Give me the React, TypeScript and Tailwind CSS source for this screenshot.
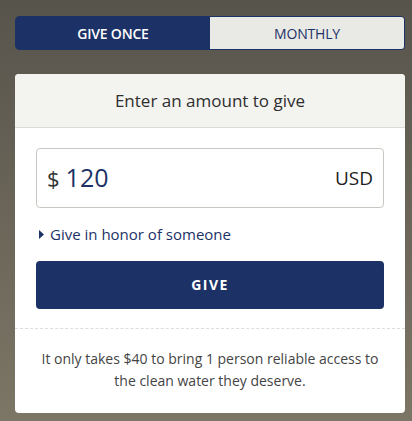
export default function App() {
  return (
    <div
      className="w-[412px] h-[421px] bg-gradient-to-b from-[#57544c] via-[#6a6558] to-[#7c7666] pl-[15px] pr-[7px] pt-[16px]"
      style={{ fontFamily: '"Open Sans", "Liberation Sans", sans-serif' }}
    >
      {/* Frequency toggle */}
      <div className="flex h-[34px] rounded-[4px] border border-[#1c3266] overflow-hidden">
        <button className="flex-1 bg-[#1c3266] text-white text-[14px] font-semibold tracking-[-0.2px]">
          GIVE ONCE
        </button>
        <button className="flex-1 bg-[#e9e9e5] text-[#1c3266] text-[14px] tracking-[-0.2px]">
          MONTHLY
        </button>
      </div>

      {/* Amount card */}
      <div className="mt-[24px] bg-white rounded-[4px] overflow-hidden">
        <div className="h-[54px] bg-[#f3f3f0] border-b border-[#dcdcd6] flex items-center justify-center">
          <h2 className="text-[17px] text-[#2e2e2e] font-medium">Enter an amount to give</h2>
        </div>

        <div className="px-[21px] pt-[20px] pb-[19px]">
          <div className="h-[60px] border border-[#c8c8c2] rounded-[4px] flex items-center justify-between px-[10px]">
            <div className="flex items-baseline gap-[6px]">
              <span className="text-[22px] text-[#333333]">$</span>
              <span className="text-[25px] text-[#1c3266]">120</span>
            </div>
            <span className="text-[19px] text-[#222222]">USD</span>
          </div>

          <div className="flex items-center gap-[6px] mt-[15px] pl-[3px]">
            <svg width="5" height="9" viewBox="0 0 5 9">
              <path d="M0 0 L5 4.5 L0 9 Z" fill="#1c3266" />
            </svg>
            <span className="text-[15px] text-[#1c3266] font-medium">Give in honor of someone</span>
          </div>

          <button className="mt-[15px] w-full h-[48px] bg-[#1c3266] rounded-[4px] text-white text-[14px] font-bold tracking-[1.5px]">
            GIVE
          </button>
        </div>

        <div className="border-t border-dashed border-[#dddddd] px-[20px] pt-[19px] pb-[21px]">
          <p className="text-center text-[14px] leading-[22px] text-[#444444]">
            It only takes $40 to bring 1 person reliable access to the clean water they deserve.
          </p>
        </div>
      </div>
    </div>
  );
}
